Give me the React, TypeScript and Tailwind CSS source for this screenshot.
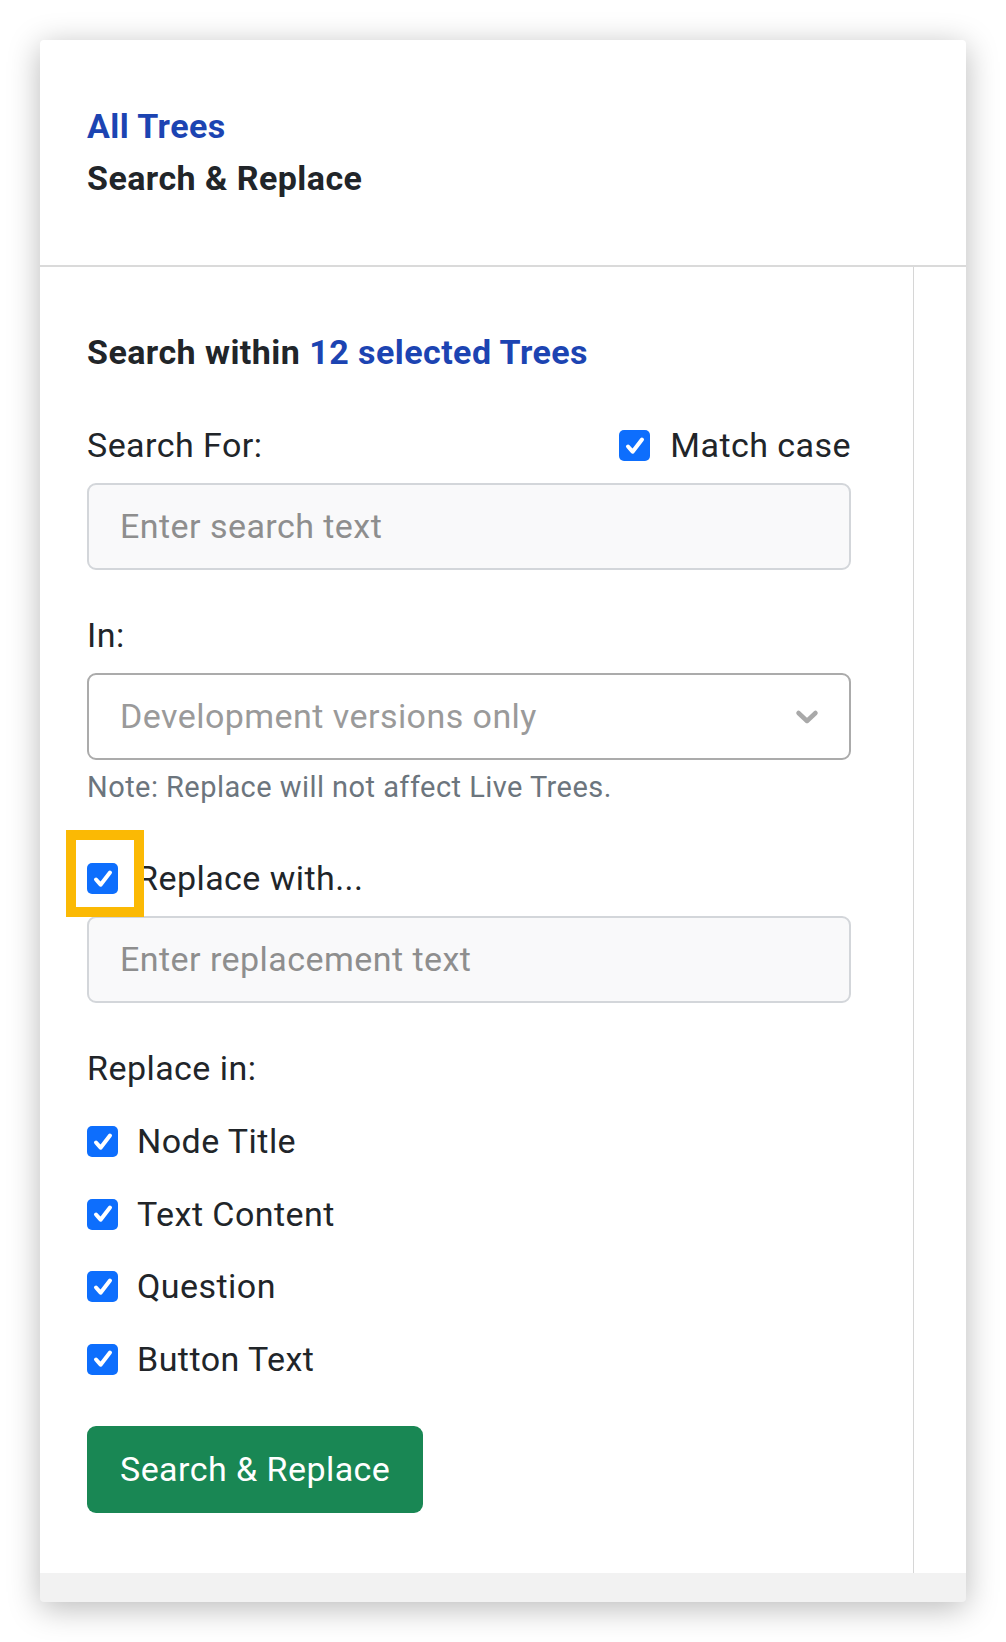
import { ReactNode } from "react"

function CheckBox() {
    return (
        <span className="w-[31px] h-[31px] rounded-[5px] bg-[#0d6efd] flex items-center justify-center shrink-0">
            <svg
                width="24"
                height="24"
                viewBox="0 0 24 24"
                fill="none"
                stroke="white"
                strokeWidth="4"
                strokeLinecap="round"
                strokeLinejoin="round"
            >
                <path d="M5 12.5l4.6 5.2L19 5.5" />
            </svg>
        </span>
    )
}

function CheckRow({ label }: { label: string }) {
    return (
        <label className="flex items-center gap-[19px] leading-[51px]">
            <CheckBox />
            <span>{label}</span>
        </label>
    )
}

function TextInput({ placeholder }: { placeholder: string }) {
    return (
        <div className="h-[87px] rounded-[9px] border-2 border-[#d3d6da] bg-[#f9f9fa] px-[31px] flex items-center text-[#8e8e8e]">
            {placeholder}
        </div>
    )
}

function Label({ children }: { children: ReactNode }) {
    return <div className="leading-[51px]">{children}</div>
}

export default function App() {
    return (
        <div
            className="bg-white p-[40px] text-[34px] tracking-[0.45px] text-[#212529]"
            style={{ fontFamily: "Roboto, 'Liberation Sans', sans-serif" }}
        >
            <div className="w-[926px] rounded-[4px] bg-[#f2f2f2] shadow-[0_6px_32px_rgba(0,0,0,0.28)] overflow-hidden">
                <div className="h-[227px] bg-white border-b-2 border-[#dadada] pl-[47px] pt-[60px] font-bold leading-[52px]">
                    <div className="text-[#1c44b2]">All Trees</div>
                    <div>Search &amp; Replace</div>
                </div>

                <div className="flex bg-white">
                    <div className="w-[874px] border-r border-[#d6d6d6] pl-[47px] pr-[62px] pt-[60px] pb-[60px]">
                        <div className="font-bold leading-[51px]">
                            Search within{" "}
                            <span className="text-[#1c44b2]">
                                12 selected Trees
                            </span>
                        </div>

                        <div className="mt-[42px] flex items-center justify-between leading-[51px]">
                            <span>Search For:</span>
                            <label className="flex items-center gap-[20px]">
                                <CheckBox />
                                <span>Match case</span>
                            </label>
                        </div>

                        <div className="mt-[12px]">
                            <TextInput placeholder="Enter search text" />
                        </div>

                        <div className="mt-[40px]">
                            <Label>In:</Label>
                        </div>

                        <div className="mt-[12px] h-[87px] rounded-[9px] border-2 border-[#ababab] bg-white pl-[31px] pr-[30px] flex items-center justify-between text-[#9a9a9a]">
                            <span>Development versions only</span>
                            <svg
                                width="24"
                                height="16"
                                viewBox="0 0 24 16"
                                fill="none"
                                stroke="#a9a9a9"
                                strokeWidth="4.5"
                                strokeLinecap="round"
                                strokeLinejoin="round"
                            >
                                <path d="M3.5 4l8.5 8 8.5-8" />
                            </svg>
                        </div>

                        <div className="mt-[5px] text-[29px] leading-[44px] text-[#6c757d]">
                            Note: Replace will not affect Live Trees.
                        </div>

                        <div className="mt-[44px] relative">
                            <CheckRow label="Replace with..." />
                            <span className="absolute left-[-21px] top-[-23px] w-[78px] h-[87px] border-[10px] border-[#fbb904]" />
                        </div>

                        <div className="mt-[12px]">
                            <TextInput placeholder="Enter replacement text" />
                        </div>

                        <div className="mt-[40px]">
                            <Label>Replace in:</Label>
                        </div>

                        <div className="mt-[22px] flex flex-col gap-[21.5px]">
                            <CheckRow label="Node Title" />
                            <CheckRow label="Text Content" />
                            <CheckRow label="Question" />
                            <CheckRow label="Button Text" />
                        </div>

                        <button className="mt-[41px] h-[87px] px-[33px] rounded-[9px] bg-[#198754] text-white leading-[51px]">
                            Search &amp; Replace
                        </button>
                    </div>
                    <div className="flex-1" />
                </div>

                <div className="h-[29px]" />
            </div>
        </div>
    )
}
